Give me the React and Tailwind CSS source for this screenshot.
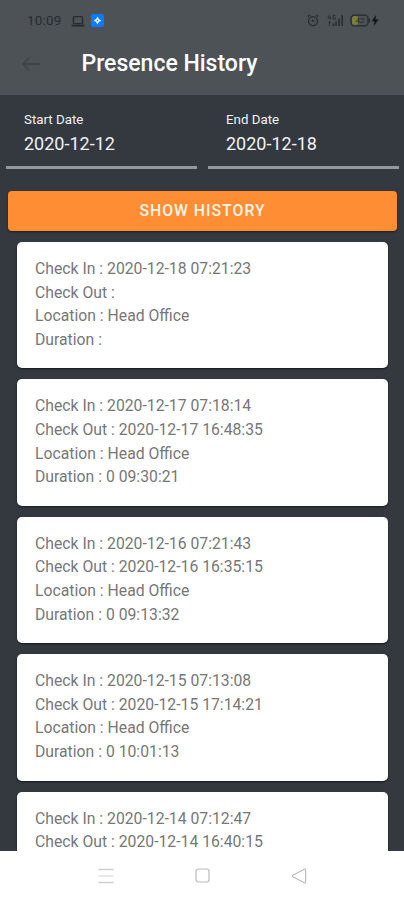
const historyItems = [
  { id: 5, checkIn: '2020-12-18 07:21:23', checkOut: '', location: 'Head Office', duration: '' },
  { id: 4, checkIn: '2020-12-17 07:18:14', checkOut: '2020-12-17 16:48:35', location: 'Head Office', duration: '0 09:30:21' },
  { id: 3, checkIn: '2020-12-16 07:21:43', checkOut: '2020-12-16 16:35:15', location: 'Head Office', duration: '0 09:13:32' },
  { id: 2, checkIn: '2020-12-15 07:13:08', checkOut: '2020-12-15 17:14:21', location: 'Head Office', duration: '0 10:01:13' },
  { id: 1, checkIn: '2020-12-14 07:12:47', checkOut: '2020-12-14 16:40:15' },
];

const StatusBar = () => (
  <div className="flex h-[41px] items-center justify-between pl-[27px] pr-[24px] text-[#272b2f]">
    <div className="flex items-center">
      <span className="w-[44px] text-[13.5px] tracking-[0.2px]">10:09</span>
      <svg width="14" height="12" viewBox="0 0 14 12" fill="none" stroke="currentColor" strokeWidth="1.4">
        <rect x="2.4" y="1.6" width="9.2" height="7" rx="1" />
        <path d="M0.5 10.6h13" strokeWidth="1.8" />
      </svg>
      <span className="ml-1.5 flex size-[13px] items-center justify-center rounded-[2.5px] bg-[#0a7bff]">
        <svg width="9" height="9" viewBox="0 0 9 9">
          <path d="M4.5 0.4L5.9 3L8.4 4.5L5.9 6L4.5 8.6L3.1 6L0.6 4.5L3.1 3Z" fill="#e4f1ff" />
          <path d="M4.5 3.4L5.4 4.5L4.5 5.6L3.6 4.5Z" fill="#0a7bff" />
        </svg>
      </span>
    </div>
    <div className="flex items-center">
      <svg width="12" height="13" viewBox="0 0 12 13" fill="none" stroke="currentColor" strokeWidth="1.3">
        <circle cx="6" cy="7.2" r="4.5" />
        <path d="M0.7 2.3L3 1.1M11.3 2.3L9 1.1M4.8 6L6 7.3L7.4 6.6" />
      </svg>
      <svg className="ml-[8px]" width="17" height="13" viewBox="0 0 17 13" fill="none" stroke="currentColor">
        <path d="M2.8 0.8L0.8 4H4M3.2 2.5V5.5M8.6 1.6H6V5H8.4V3.4M2.5 7.5V12M1.3 8.7L2.5 7.5L3.7 8.7" strokeWidth="0.9" />
        <path d="M6.3 12V9.5M9 12V7.5M12 12V4.5M15.2 12V1" strokeWidth="1.6" />
      </svg>
      <svg className="ml-[6px]" width="30" height="13" viewBox="0 0 30 13">
        <rect x="2" y="2" width="6" height="9" rx="2" fill="#7c7d36" />
        <rect x="1" y="1.2" width="17" height="10.6" rx="3.5" fill="none" stroke="currentColor" strokeWidth="1.3" />
        <path d="M19.3 4.6v3.8" stroke="currentColor" strokeWidth="1.3" />
        <text x="9.9" y="9.3" fontSize="8" textAnchor="middle" fill="currentColor">42</text>
        <path d="M26 1L21.8 7.3H24.6L23.8 12L28.5 5.5H25.4Z" fill="#101214" />
      </svg>
    </div>
  </div>
);

const Header = () => (
  <header className="h-[95px] shrink-0 bg-[#4d5256]">
    <StatusBar />
    <div className="flex h-[45px] items-center pl-[22px]">
      <svg width="19" height="14" viewBox="0 0 19 14" fill="none" stroke="#3e4245" strokeWidth="1.6">
        <path d="M7 0.8L1 7L7 13.2M1 7H18.5" />
      </svg>
      <h1 className="ml-[40.5px] pt-px text-[23px] font-medium text-white">Presence History</h1>
    </div>
  </header>
);

const DateField = ({ label, value }) => (
  <div className="h-[74px] flex-1 border-b-[3px] border-[#94979b] pl-[18px] pt-[17px] text-[#f1f2f3]">
    <p className="text-[13.3px] leading-4">{label}</p>
    <p className="mt-[3px] text-[18px] leading-[26px]">{value}</p>
  </div>
);

const HistoryCard = ({ item }) => (
  <article className="h-[126.4px] shrink-0 rounded-[5px] bg-white pl-[18px] pt-[15px] text-[15.75px] leading-[23.6px] text-[#777] shadow-[0_1px_2px_rgba(0,0,0,0.6)]">
    <p>Check In : {item.checkIn}</p>
    <p>Check Out : {item.checkOut}</p>
    {item.location ? <p>Location : {item.location}</p> : null}
    {item.location ? <p>Duration : {item.duration}</p> : null}
  </article>
);

const NavigationBar = () => (
  <nav className="flex h-[49px] shrink-0 items-center justify-between bg-white pl-[98px] pr-[97px]">
    <svg width="16" height="16" viewBox="0 0 16 16" fill="none" strokeWidth="1.4">
      <path d="M0.5 1.5h15M0.5 14.5h15" stroke="#cecece" />
      <path d="M0.5 8h15" stroke="#dedede" />
    </svg>
    <svg width="15" height="15" viewBox="0 0 15 15" fill="none" stroke="#bcbcbc" strokeWidth="1.2">
      <rect x="1" y="1" width="13" height="13" rx="2.5" />
    </svg>
    <svg width="16" height="16" viewBox="0 0 16 16" fill="none" stroke="#bcbcbc" strokeWidth="1.2" strokeLinejoin="round">
      <path d="M13.2 1.2L1.8 7.2Q0.8 8 1.8 8.8L13.2 14.8Q14.6 15.2 14.6 13.8V2.2Q14.6 0.8 13.2 1.2Z" />
    </svg>
  </nav>
);

export default function App() {
  return (
    <div className="flex h-[900px] w-[404px] flex-col overflow-hidden bg-[#343940] font-['Roboto',sans-serif]">
      <Header />
      <main className="min-h-0 flex-1 overflow-hidden">
        <div className="flex gap-[11px] pl-1.5 pr-[5px]">
          <DateField label="Start Date" value="2020-12-12" />
          <DateField label="End Date" value="2020-12-18" />
        </div>
        <button className="ml-2 mt-[22px] block h-10 w-[389px] rounded-[4px] bg-[#ff8d34] text-[15.8px] font-medium tracking-[1px] text-[#fff3e6] shadow-[0_1px_2px_rgba(0,0,0,0.5)]">
          SHOW HISTORY
        </button>
        <div className="ml-[17px] mt-[11px] flex w-[371px] flex-col gap-[11px]">
          {historyItems.map((item) => (
            <HistoryCard key={item.id} item={item} />
          ))}
        </div>
      </main>
      <NavigationBar />
    </div>
  );
}
